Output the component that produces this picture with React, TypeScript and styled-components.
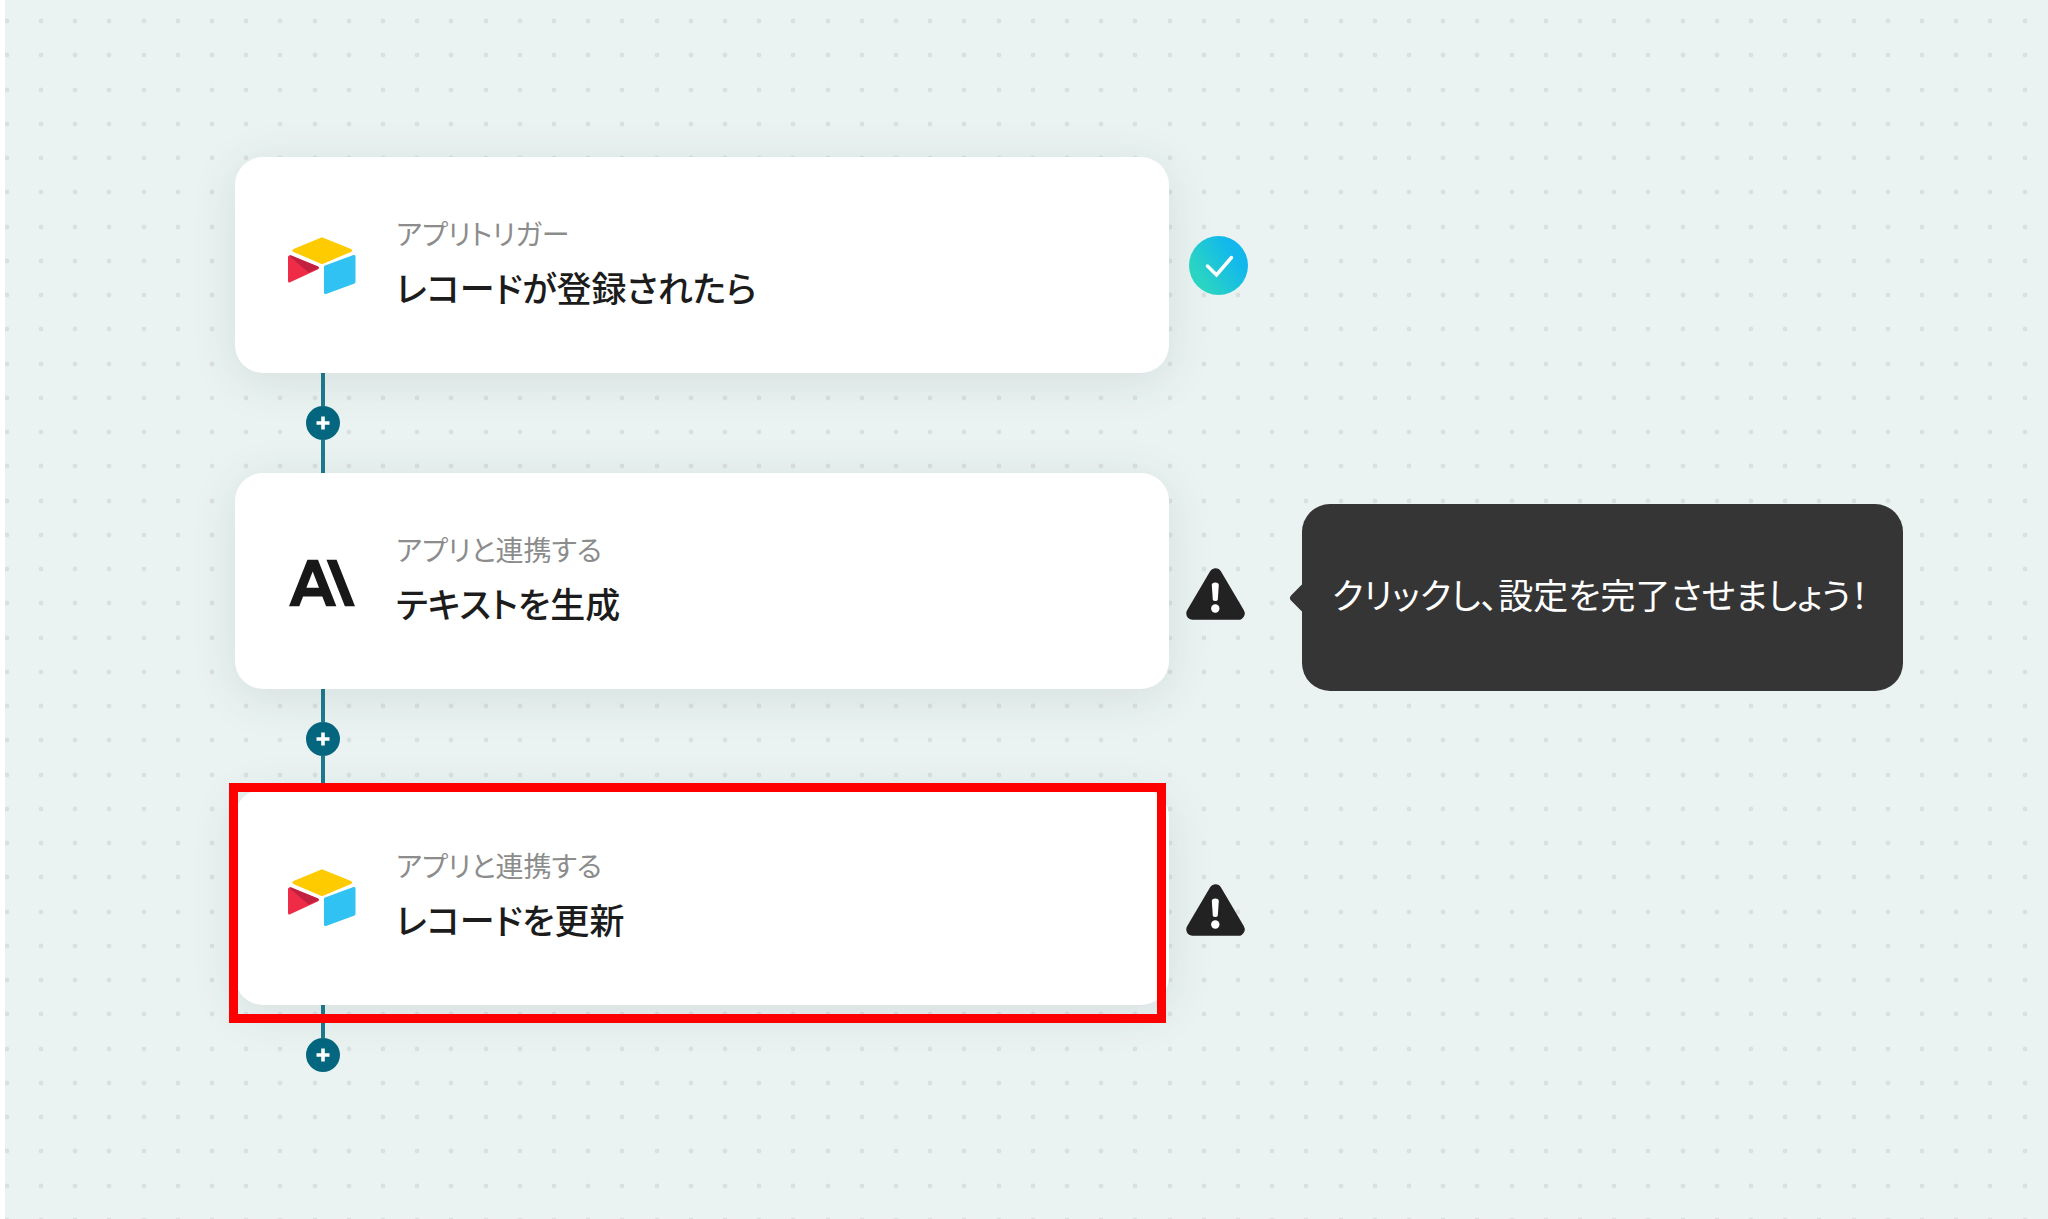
import React from "react";
import styled, { createGlobalStyle } from "styled-components";

const Global = createGlobalStyle`
  *, *::before, *::after { box-sizing: border-box; }
  body {
    margin: 0;
    background: #ffffff;
    font-family: "Noto Sans CJK JP", sans-serif;
    font-feature-settings: "palt";
  }
`;

/* One tile of the canvas grid: five dots across, four dots down. */
const dotColumns = [18, 52, 86, 121, 155];
const dotRows = [17, 51, 86, 120];
const dotTile = encodeURIComponent(
  `<svg xmlns="http://www.w3.org/2000/svg" width="171" height="137" fill="#d9e1e0">${dotRows
    .map((y) => dotColumns.map((x) => `<circle cx="${x}" cy="${y}" r="2.4"/>`).join(""))
    .join("")}</svg>`
);

const Canvas = styled.main`
  min-height: 100vh;
  margin-left: 5px;
  padding: 157px 32px 64px 230px;
  background: #eaf3f2 url("data:image/svg+xml,${dotTile}") 18px 4px;
`;

const Flow = styled.ol`
  display: flex;
  flex-direction: column;
  margin: 0;
  padding: 0;
  list-style: none;
`;

const Step = styled.li`
  display: flex;
  flex-direction: column;
`;

const Row = styled.div`
  display: flex;
  align-items: center;
  gap: 16px;
`;

const CardFrame = styled.div`
  position: relative;
  flex: 0 1 934px;
`;

const Card = styled.button`
  display: flex;
  align-items: center;
  gap: 40px;
  width: 100%;
  padding: 56px 53px 60px;
  border: 0;
  border-radius: 28px;
  background: #ffffff;
  box-shadow: 0 8px 48px rgba(40, 60, 60, 0.11);
  font: inherit;
  font-feature-settings: inherit;
  text-align: left;
  cursor: pointer;
`;

const Highlight = styled.span`
  position: absolute;
  inset: -6px 3px -18px -6px;
  border: 9px solid #ff0000;
  z-index: 2;
  pointer-events: none;
`;

const CardText = styled.span`
  display: flex;
  flex-direction: column;
  gap: 8px;
`;

const Kind = styled.span`
  font-size: 28px;
  line-height: 40px;
  color: #8c8c8c;
`;

const Title = styled.span`
  font-size: 35px;
  line-height: 52px;
  font-weight: 500;
  color: #1c1c1c;
`;

const Status = styled.button`
  position: relative;
  flex: none;
  display: flex;
  padding: 0;
  border: 0;
  background: none;
  font: inherit;
  font-feature-settings: inherit;
  cursor: pointer;
`;

const Tooltip = styled.span`
  position: absolute;
  top: -38px;
  left: calc(100% + 53px);
  display: flex;
  align-items: center;
  height: 187px;
  padding: 0 35px 8px 30px;
  border-radius: 28px;
  background: #353535;
  color: #ffffff;
  font-size: 35px;
  line-height: 52px;
  white-space: nowrap;

  &::before {
    content: "";
    position: absolute;
    top: 50%;
    left: -9px;
    width: 22px;
    height: 22px;
    margin-top: -11px;
    border-radius: 4px;
    background: inherit;
    transform: rotate(45deg);
  }
`;

const Connector = styled.div`
  display: flex;
  flex-direction: column;
  align-items: center;
  align-self: flex-start;
  margin-left: 71px;
`;

const Line = styled.span`
  width: 4px;
  height: 33px;
  background: #20798e;
`;

const AddButton = styled.button`
  display: flex;
  padding: 0;
  border: 0;
  border-radius: 50%;
  background: #04667f;
  cursor: pointer;
`;

const AirtableIcon = () => (
  <svg width="68" height="62" viewBox="0 -5 68 62" aria-hidden="true" strokeLinejoin="round" strokeWidth="3">
    <path d="M6 13.5 34 2 62.500 13.500 34 25.500Z" fill="#fecb00" stroke="#fecb00" />
    <path d="M37.500 30 66 19.500V45L37.500 55.500Z" fill="#30c2f2" stroke="#30c2f2" />
    <path d="M1.500 20 29.500 30.800 1.500 44Z" fill="#ee2c48" stroke="#ee2c48" />
    <path d="M1.500 19 20.500 35.500 30 31.500Q31.500 30.500 30 29.500L3 18.300Q1.500 18 1.500 19Z" fill="#c2203f" />
  </svg>
);

const AnthropicIcon = () => (
  <svg width="68" height="62" viewBox="0 -3 68 62" aria-hidden="true">
    <path
      transform="translate(1 -1) scale(2.75)"
      d="M17.304 3.541h-3.672l6.696 16.918H24Zm-10.608 0L0 20.459h3.744l1.370-3.553h7.005l1.369 3.553h3.744L10.536 3.541Zm-.371 10.223 2.291-5.945 2.292 5.945Z"
      fill="#181818"
    />
  </svg>
);

const DoneIcon = () => (
  <svg width="64" height="60" viewBox="0 0 64 60" aria-hidden="true">
    <defs>
      <linearGradient id="done" x1="0.1" y1="0.75" x2="0.9" y2="0.25">
        <stop offset="0.1" stopColor="#2ad4c2" />
        <stop offset="0.85" stopColor="#12b8ec" />
      </linearGradient>
    </defs>
    <circle cx="33.500" cy="30.500" r="29.500" fill="url(#done)" />
    <path d="M22.500 31 31.500 40 46.500 22.500" fill="none" stroke="#ffffff" strokeWidth="3.500" strokeLinecap="round" />
  </svg>
);

const WarningIcon = () => (
  <svg width="64" height="78" viewBox="0 0 64 78" aria-hidden="true">
    <path
      d="M30.500 32.500 53.500 71.500H7.500Z"
      fill="#222222"
      stroke="#222222"
      strokeWidth="12.500"
      strokeLinejoin="round"
    />
    <path d="M26.800 43Q26.800 40.500 30.300 40.500T33.800 43L32.800 57.500Q32.600 59 30.300 59T27.800 57.500Z" fill="#ffffff" />
    <circle cx="30.300" cy="66.500" r="4.200" fill="#ffffff" />
  </svg>
);

const PlusIcon = () => (
  <svg width="34" height="34" viewBox="0 0 34 34" aria-hidden="true">
    <path d="M17 10.500V23.500M10.500 17H23.500" stroke="#ffffff" strokeWidth="3.600" />
  </svg>
);

type StepData = {
  app: "airtable" | "anthropic";
  kind: string;
  title: string;
  done?: boolean;
  hint?: string;
  highlighted?: boolean;
};

const steps: StepData[] = [
  { app: "airtable", kind: "アプリトリガー", title: "レコードが登録されたら", done: true },
  {
    app: "anthropic",
    kind: "アプリと連携する",
    title: "テキストを生成",
    hint: "クリックし、設定を完了させましょう！",
  },
  { app: "airtable", kind: "アプリと連携する", title: "レコードを更新", highlighted: true },
];

export default function App() {
  return (
    <>
      <Global />
      <Canvas>
        <Flow>
          {steps.map((step, index) => (
            <Step key={step.title}>
              <Row>
                <CardFrame>
                  <Card type="button">
                    {step.app === "airtable" ? <AirtableIcon /> : <AnthropicIcon />}
                    <CardText>
                      <Kind>{step.kind}</Kind>
                      <Title>{step.title}</Title>
                    </CardText>
                  </Card>
                  {step.highlighted && <Highlight />}
                </CardFrame>
                <Status type="button" aria-label={step.hint ? undefined : step.title}>
                  {step.done ? <DoneIcon /> : <WarningIcon />}
                  {step.hint && <Tooltip role="tooltip">{step.hint}</Tooltip>}
                </Status>
              </Row>
              <Connector>
                <Line />
                <AddButton type="button" aria-label="追加">
                  <PlusIcon />
                </AddButton>
                {index < steps.length - 1 && <Line />}
              </Connector>
            </Step>
          ))}
        </Flow>
      </Canvas>
    </>
  );
}
